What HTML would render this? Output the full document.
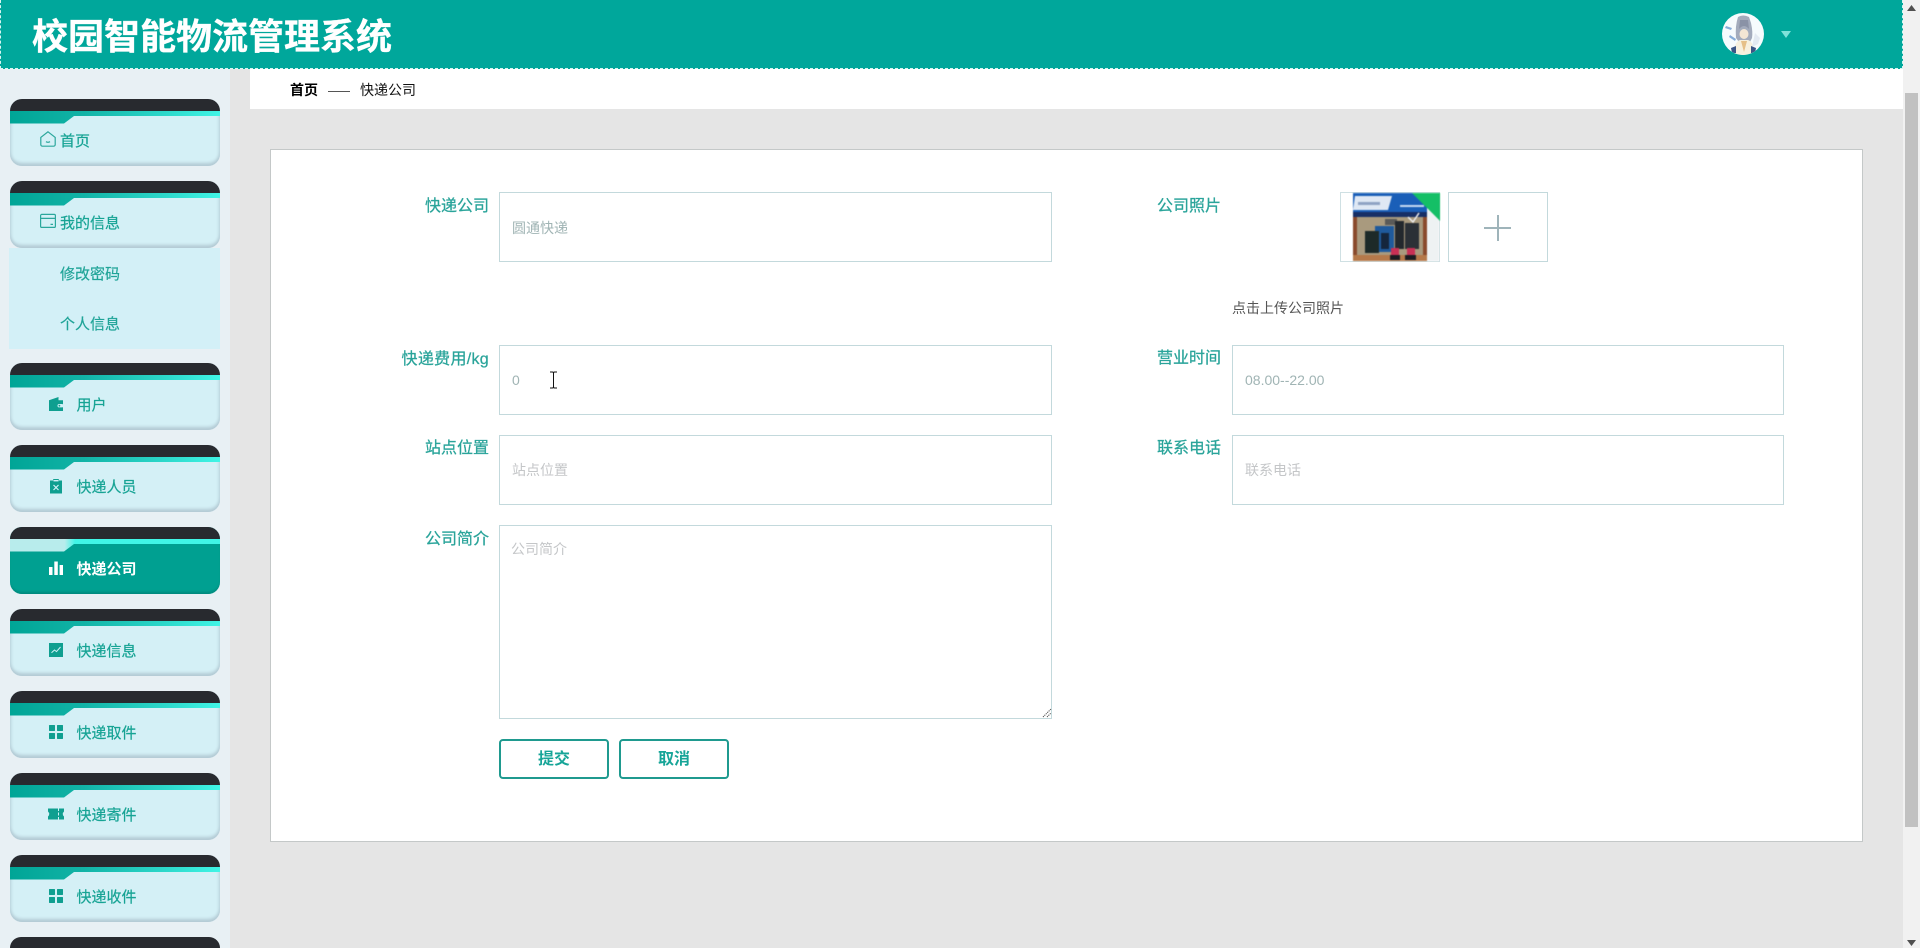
<!DOCTYPE html>
<html lang="zh">
<head>
<meta charset="utf-8">
<title>校园智能物流管理系统</title>
<style>
*{box-sizing:border-box;margin:0;padding:0}
html,body{width:1920px;height:948px;overflow:hidden;background:#e5e5e5;font-family:"Liberation Sans","Noto Sans CJK SC",sans-serif}
#root{position:relative;width:1920px;height:948px;overflow:hidden;background:#e5e5e5}
.abs,.m,.t,.lb,.in,.ph,svg{position:absolute}
#hd{left:0;top:0;width:1903px;height:69px;background:#00a79b;border:1px dashed #d8f5f2;border-top:none}
#title{position:absolute;left:31px;top:12px;font-size:36px;line-height:50px;font-weight:700;color:#fff;white-space:nowrap;-webkit-text-stroke:.3px #fff}
#side{left:0;top:69px;width:230px;height:879px;background:#e8f0f4}
#bc{left:250px;top:69px;width:1653px;height:40px;background:#fff}
#card{left:270px;top:149px;width:1593px;height:693px;background:#fff;border:1px solid #c4c8c8}
.m{left:10px;width:210px;height:67px;border-radius:12px;background:#d4f0f6;box-shadow:inset 0 -4px 3px -1px #b3cad4,inset 3px 0 3px -2px #b9d3dc,inset -3px 0 3px -2px #b9d3dc;overflow:hidden}
.m:before{content:"";position:absolute;left:0;top:0;width:100%;height:12px;background:#282a2f}
.m:after{content:"";position:absolute;left:0;top:12px;width:100%;height:12.5px;background:linear-gradient(90deg,#00a596 0,#12b3a6 35%,#2dd9cb 75%,#40f5e6 100%);clip-path:polygon(0 0,210px 0,210px 5px,64px 5px,54px 12.5px,0 12.5px)}
.m.on{background:#00a091;box-shadow:inset 0 -3px 2px -1px #008a7e}
.m.on:after{background:linear-gradient(90deg,#b8ecec 0,#b8ecec 26%,#40f5e6 31%,#40f5e6 100%)}
.m span{position:absolute;z-index:2;left:66.500px;top:31px;font-size:15px;line-height:24px;color:#16a394;white-space:nowrap;-webkit-text-stroke:.2px #16a394}
.m.first span{left:50px}
.m.on span{color:#fff;font-weight:700;-webkit-text-stroke:0}
.m svg{z-index:2;left:38px;top:33px;width:16px;height:16px}
.m.first svg{left:30px;top:32px}
.t{white-space:nowrap}
.lb{font-size:16px;line-height:24px;color:#2aa49a;text-align:right;width:150px;left:339px;white-space:nowrap;-webkit-text-stroke:.25px #2aa49a}
.lb.r{left:1071px}
.in{background:#fff;border:1px solid #c3d9dc;width:553px;height:70px;left:499px}
.in.r{left:1232px;width:552px}
.ph{font-size:14px;line-height:20px;color:#a0b4b4;white-space:nowrap}
.ph.g{color:#c4c6c8}
.btn{position:absolute;top:739px;width:110px;height:40px;border:2px solid #1f9a8f;border-radius:4px;background:#fff;color:#17a598;font-size:16px;font-weight:700;line-height:37px;text-align:center}
#sb{left:1903px;top:0;width:17px;height:948px;background:#f1f1f1}
#th{left:1905px;top:93px;width:13px;height:734px;background:#c1c1c1}
</style>
</head>
<body>
<div id="root">
<div class="abs" id="side"></div>
<div class="abs" id="bc"></div>
<div class="abs" id="hd"><div id="title">校园智能物流管理系统</div></div>

<!-- avatar -->
<svg style="left:1722px;top:13px" width="42" height="42" viewBox="0 0 42 42">
<defs><clipPath id="c"><circle cx="21" cy="21" r="21"/></clipPath></defs>
<g clip-path="url(#c)">
<rect width="42" height="42" fill="#f6fbfd"/>
<path d="M16 4q5-3 11 0l2 6q2 9 1 15l-2 4H17l-3-4q-1-12 2-21z" fill="#a3abbc"/>
<path d="M17 16q5-6 10 0l-1-9H18z" fill="#8a92a6"/>
<ellipse cx="22" cy="21" rx="4.500" ry="5" fill="#f3e6d4"/>
<path d="M12 42q0-13 6-15h8q6 2 7 15z" fill="#f7f0de"/>
<path d="M19 28l3 11 3-11z" fill="#e6c088"/>
<path d="M4 13l6 2-1 2-6-2zM8 22l6 4-1 2-6-4z" fill="#86acd8"/>
<path d="M33 20l5 5-2 6-6 3z" fill="#e3eaf2"/>
<path d="M9 35l5-2v7H10z" fill="#3b5585"/>
<path d="M34 35l-5-2v7h4z" fill="#3b5585"/>
</g>
</svg>
<svg style="left:1781px;top:31px" width="10" height="7" viewBox="0 0 10 7"><path d="M0 0H10L5 7Z" fill="#7fe2da"/></svg>

<!-- breadcrumb -->
<div class="t" style="left:290px;top:79px;font-size:14px;line-height:22px;font-weight:700;color:#000">首页</div>
<div class="abs" style="left:328px;top:91px;width:22px;height:1px;background:#555"></div>
<div class="t" style="left:360px;top:79px;font-size:14px;line-height:22px;color:#111">快递公司</div>

<!-- sidebar -->
<div class="m first" style="top:99px"><span>首页</span>
<svg viewBox="0 0 16 16" fill="none" stroke="#2ba79c" stroke-width="1.2"><path d="M8 .8 15.200 6.400V13.600a1.600 1.600 0 0 1-1.600 1.600H2.400A1.600 1.600 0 0 1 .8 13.600V6.400Z"/><path d="M6 10.600q2 1.400 4 0"/></svg></div>

<div class="m first" style="top:181px"><span>我的信息</span>
<svg viewBox="0 0 16 16" fill="none" stroke="#2ba79c" stroke-width="1.2"><rect x=".6" y="1.400" width="14.800" height="13" rx="1.200"/><path d="M.6 5.400H15.400M10.500 11.400H13"/></svg></div>
<div class="abs" style="left:9px;top:248px;width:211px;height:101px;background:#d3f0f7"></div>
<div class="t" style="left:60px;top:263px;font-size:15px;line-height:24px;color:#20a498;-webkit-text-stroke:.2px #20a498">修改密码</div>
<div class="t" style="left:60px;top:313px;font-size:15px;line-height:24px;color:#20a498;-webkit-text-stroke:.2px #20a498">个人信息</div>

<div class="m" style="top:363px"><span>用户</span>
<svg viewBox="0 0 16 16"><path d="M1 4.200 10.500 1v3.200H15V15H1Z" fill="#0f9f90"/><rect x="9.500" y="8" width="6" height="3.400" rx="1.700" fill="#d2f0f7"/><circle cx="11.400" cy="9.700" r=".9" fill="#0f9f90"/></svg></div>

<div class="m" style="top:445px"><span>快递人员</span>
<svg viewBox="0 0 16 16"><path d="M2 2.500H5.200V1H10.800V2.500H14V15.500H2Z" fill="#0f9f90"/><rect x="5.500" y="2" width="5" height="1.400" fill="#d2f0f7"/><path d="M5.500 7 10.500 12M10.500 7 5.500 12" stroke="#d2f0f7" stroke-width="1.200"/></svg></div>

<div class="m on" style="top:527px"><span>快递公司</span>
<svg viewBox="0 0 16 16"><path d="M1 7H4.500V15H1ZM6.300 1.500H9.800V15H6.300ZM11.600 5H15V15H11.600Z" fill="#fff"/></svg></div>

<div class="m" style="top:609px"><span>快递信息</span>
<svg viewBox="0 0 16 16"><rect x="1" y="1" width="14" height="14" fill="#0f9f90"/><path d="M3.500 10.800 6.500 8 8.500 9.600 12.500 5" fill="none" stroke="#d2f0f7" stroke-width="1"/></svg></div>

<div class="m" style="top:691px"><span>快递取件</span>
<svg viewBox="0 0 16 16" fill="#0f9f90"><rect x="1" y="1" width="6" height="6" rx=".6"/><rect x="9" y="1" width="6" height="6" rx=".6"/><rect x="1" y="9" width="6" height="6" rx=".6"/><rect x="9" y="9" width="6" height="6" rx=".6"/></svg></div>

<div class="m" style="top:773px"><span>快递寄件</span>
<svg viewBox="0 0 16 16"><path d="M0 2.500H16V5.500Q13.500 8 16 10.500V13.500H0V10.500Q2.500 8 0 5.500Z" fill="#0f9f90"/><path d="M10.500 2.500V5M10.500 6.500V9.500M10.500 11V13.500" stroke="#d2f0f7" stroke-width="1"/></svg></div>

<div class="m" style="top:855px"><span>快递收件</span>
<svg viewBox="0 0 16 16" fill="#0f9f90"><rect x="1" y="1" width="6" height="6" rx=".6"/><rect x="9" y="1" width="6" height="6" rx=".6"/><rect x="1" y="9" width="6" height="6" rx=".6"/><rect x="9" y="9" width="6" height="6" rx=".6"/></svg></div>

<div class="abs" style="left:10px;top:937px;width:210px;height:11px;background:#282a2f;border-radius:12px 12px 0 0"></div>

<!-- card -->
<div class="abs" id="card"></div>

<div class="lb" style="top:195px">快递公司</div>
<div class="in" style="top:192px"></div>
<div class="ph" style="left:512px;top:218px">圆通快递</div>

<div class="lb r" style="top:195px">公司照片</div>
<div class="abs" style="left:1340px;top:192px;width:100px;height:70px;background:#fff;border:1px solid #cfe0e3"></div>
<svg style="left:1353px;top:192.500px;filter:blur(.5px)" width="87" height="69" viewBox="0 0 87 69">
<rect width="74" height="68" fill="#8a4a2c"/>
<rect width="74" height="19" fill="#1a5fb8"/>
<rect y="19" width="74" height="5" fill="#172f66"/>
<path d="M2 3H39L35 17H0Z" fill="#dfe8f4"/>
<rect x="5" y="9" width="22" height="3" fill="#8fa3c4"/>
<rect x="47" y="12" width="24" height="2" fill="#c7daf2"/>
<rect x="4" y="24" width="66" height="38" fill="#a99a7e"/>
<rect x="22" y="33" width="19" height="26" fill="#1f5a9c"/>
<rect x="12" y="38" width="14" height="22" fill="#1d2a28"/>
<rect x="28" y="40" width="8" height="16" fill="#15263c"/>
<rect x="32" y="26" width="12" height="6" fill="#5a5a58"/>
<rect x="42" y="28" width="9" height="28" fill="#23282d"/>
<rect x="52" y="30" width="14" height="26" fill="#2b3036"/>
<path d="M55 24l5 5 6-9" fill="none" stroke="#eee" stroke-width="1.500"/>
<rect x="38" y="55" width="8" height="7" fill="#c93055"/>
<rect x="54" y="55" width="8" height="7" fill="#c93055"/>
<rect x="0" y="62" width="74" height="6" fill="#b5794a"/>
<rect x="37" y="62" width="10" height="5" fill="#1c1c22"/>
<rect x="52" y="62" width="11" height="5" fill="#1c1c22"/>
<path d="M59 0H87V28Z" fill="#14bf66"/>
<path d="M74 15 86 27V68H74Z" fill="#eef2f3"/>
</svg>
<div class="abs" style="left:1448px;top:192px;width:100px;height:70px;background:#fff;border:1px solid #c3d9dc"></div>
<div class="abs" style="left:1484px;top:227px;width:27px;height:2px;background:#9fb4ba"></div>
<div class="abs" style="left:1497px;top:215px;width:2px;height:26px;background:#9fb4ba"></div>
<div class="t" style="left:1232px;top:298px;font-size:14px;line-height:20px;color:#555">点击上传公司照片</div>

<div class="lb" style="top:348px;letter-spacing:.3px">快递费用/kg</div>
<div class="in" style="top:345px"></div>
<div class="ph" style="left:512px;top:370px">0</div>
<svg style="left:549px;top:371px" width="9" height="18" viewBox="0 0 9 18"><path d="M1 1H3.500Q4.500 1 4.500 2.500V15.500Q4.500 17 3.500 17H1M8 1H5.500Q4.500 1 4.500 2.500M8 17H5.500Q4.500 17 4.500 15.500" fill="none" stroke="#111" stroke-width="1"/></svg>

<div class="lb r" style="top:347px">营业时间</div>
<div class="in r" style="top:345px"></div>
<div class="ph" style="left:1245px;top:370px">08.00--22.00</div>

<div class="lb" style="top:437px">站点位置</div>
<div class="in" style="top:435px"></div>
<div class="ph g" style="left:512px;top:460px">站点位置</div>

<div class="lb r" style="top:437px">联系电话</div>
<div class="in r" style="top:435px"></div>
<div class="ph g" style="left:1245px;top:460px">联系电话</div>

<div class="lb" style="top:528px">公司简介</div>
<div class="in" style="top:525px;height:194px"></div>
<div class="ph g" style="left:511px;top:539px">公司简介</div>
<svg style="left:1042px;top:708px" width="10" height="10" viewBox="0 0 10 10"><path d="M1 9 9 1M5 9 9 5" stroke="#555" stroke-width="1" stroke-dasharray="1.200 .8"/></svg>

<div class="btn" style="left:499px">提交</div>
<div class="btn" style="left:619px">取消</div>

<!-- scrollbar -->
<div class="abs" id="sb"></div>
<div class="abs" id="th"></div>
<svg style="left:1907px;top:5px" width="9" height="6" viewBox="0 0 9 6"><path d="M4.500 0 9 6H0Z" fill="#505050"/></svg>
<svg style="left:1907px;top:940px" width="9" height="6" viewBox="0 0 9 6"><path d="M0 0H9L4.500 6Z" fill="#505050"/></svg>
</div>
</body>
</html>
